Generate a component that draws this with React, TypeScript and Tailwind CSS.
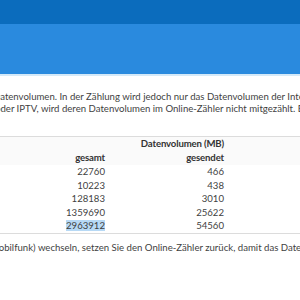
const rows = [
  ["22760", "466"],
  ["10223", "438"],
  ["128183", "3010"],
  ["1359690", "25622"],
  ["2963912", "54560"],
];

export default function App() {
  return (
    <div className="w-[300px] h-[300px] overflow-hidden bg-white text-[#3f3f3f] font-['Lato','Open_Sans',sans-serif]">
      {/* header bars */}
      <div className="h-[24px] bg-[#0b6cbd]" />
      <div className="h-[52px] bg-[#2a8ade] border-b-2 border-[#d4e9f8]" />

      <div className="pt-[15px] text-[9.6px] leading-[12px] whitespace-nowrap">
        <p className="-ml-[7px]">Datenvolumen. In der Zählung wird jedoch nur das Datenvolumen der Internet-Verbindung</p>
        <p className="-ml-[5px]">oder IPTV, wird deren Datenvolumen im Online-Zähler nicht mitgezählt. Bitte beachten</p>
      </div>

      {/* table */}
      <div className="mt-[21px] border-t border-b border-[#dcdcdc] text-[9.6px]">
        <div className="bg-[#fafafa] font-bold text-[#333] leading-[14px] tracking-[-0.15px]">
          <div className="flex">
            <span className="w-[224px] text-right">Datenvolumen (MB)</span>
          </div>
          <div className="flex">
            <span className="w-[105px] text-right">gesamt</span>
            <span className="w-[119px] text-right">gesendet</span>
          </div>
        </div>
        <div className="leading-[13.5px]">
          {rows.map(([a, b], i) => (
            <div key={i} className="flex">
              <span className="w-[105px] text-right">
                {i === 4 ? <span className="bg-[#b7d9f5]">{a}</span> : a}
              </span>
              <span className="w-[119px] text-right">{b}</span>
            </div>
          ))}
        </div>
      </div>

      <p className="mt-[8px] -ml-[10px] text-[9.6px] leading-[12px] whitespace-nowrap">
        Mobilfunk) wechseln, setzen Sie den Online-Zähler zurück, damit das Datenvolumen
      </p>
    </div>
  );
}
